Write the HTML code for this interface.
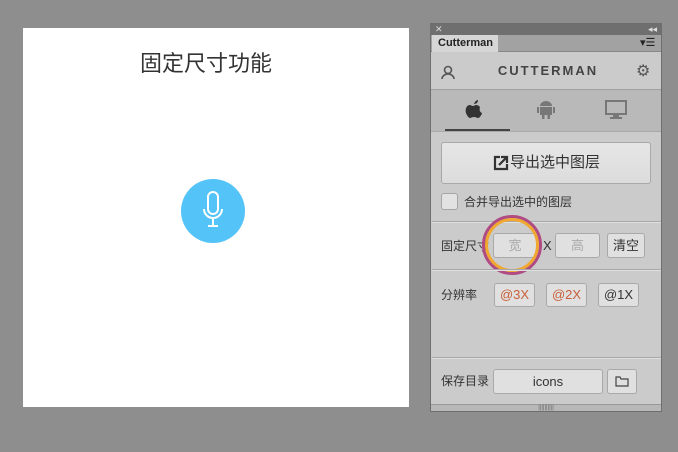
<!DOCTYPE html><html><head><meta charset="utf-8"><style>
body{margin:0;width:678px;height:452px;background:#8e8e8e;position:relative;overflow:hidden;font-family:"Liberation Sans","Noto Sans CJK SC",sans-serif}
div{position:absolute;box-sizing:border-box}
.btn{background:#e0e0e0;border:1px solid #a9a9a9;border-radius:3px;text-align:center;font-size:13px;color:#333}
.lbl{font-size:12px;color:#333;line-height:14px}
.sep{left:432px;width:229px;background:#a8a8a8;border-bottom:1px solid #e0e0e0;height:2px}
</style></head><body>
<div style="left:23px;top:28px;width:386px;height:379px;background:#fff"></div>
<div style="left:23px;top:50px;width:366px;text-align:center;font-size:22px;color:#333;line-height:28px">固定尺寸功能</div>
<div style="left:181px;top:179px;width:64px;height:64px;border-radius:50%;background:#53c3f8"></div>
<svg style="position:absolute;left:181px;top:179px" width="64" height="64"><rect x="27" y="13" width="10" height="22" rx="5" fill="none" stroke="#fff" stroke-width="2"/><path d="M23 30 a9 9 0 0 0 18 0 M32 39 v8 M27 47 h10" fill="none" stroke="#fff" stroke-width="2"/></svg>

<div style="left:430px;top:23px;width:232px;height:389px;background:#cbcbcb;border:1px solid #6e6e6e"></div>
<div style="left:431px;top:24px;width:230px;height:11px;background:#6f6f6f;color:#ddd;font-size:9px;line-height:10px;padding-left:4px">✕<span style="position:absolute;right:4px">◂◂</span></div>
<div style="left:431px;top:35px;width:230px;height:17px;background:#a2a2a2;border-bottom:1px solid #888"></div>
<div style="left:432px;top:35px;width:66px;height:17px;background:#d6d6d6;font-size:11px;font-weight:bold;color:#222;padding-left:6px;line-height:17px">Cutterman</div>
<div style="left:640px;top:36px;font-size:11px;color:#222">▾☰</div>
<svg style="position:absolute;left:441px;top:65px" width="14" height="14"><circle cx="7" cy="5" r="3.5" fill="none" stroke="#555" stroke-width="1.6"/><path d="M1 14 a6 5 0 0 1 12 0" fill="none" stroke="#555" stroke-width="1.6"/></svg>
<div style="left:470px;top:63px;width:156px;text-align:center;font-size:13px;font-weight:bold;letter-spacing:2px;color:#444">CUTTERMAN</div>
<div style="left:636px;top:61px;font-size:16px;color:#555">⚙</div>
<div style="left:431px;top:89px;width:230px;height:43px;background:#b9b9b9;border-top:1px solid #a0a0a0;border-bottom:1px solid #a8a8a8"></div>
<div style="left:445px;top:129px;width:65px;height:2px;background:#444"></div>
<svg style="position:absolute;left:465px;top:99px" width="18" height="20"><path d="M9 5 c1-3 3-4 4-4 c0 2-1 4-4 4z M4 6 c-3 1-4 5-3 8 c1 3 3 5 4 5 c1 0 2-1 4-1 c2 0 3 1 4 1 c2 0 4-4 4-5 c-2-1-3-3-2-6 c-1-1-2-2-4-2 c-1 0-2 1-3 1 c-1 0-2-1-4-1z" fill="#333"/></svg>
<svg style="position:absolute;left:537px;top:100px" width="18" height="19"><path d="M3 6 a6 5 0 0 1 12 0z" fill="#777"/><rect x="3" y="7" width="12" height="8" fill="#777"/><rect x="0" y="7" width="2" height="6" fill="#777"/><rect x="16" y="7" width="2" height="6" fill="#777"/><rect x="5" y="14" width="2.5" height="5" fill="#777"/><rect x="10.5" y="14" width="2.5" height="5" fill="#777"/></svg>
<svg style="position:absolute;left:605px;top:100px" width="22" height="19"><rect x="1" y="1" width="20" height="13" fill="none" stroke="#777" stroke-width="2"/><rect x="8" y="14" width="6" height="3" fill="#777"/><rect x="5" y="17" width="12" height="2" fill="#777"/></svg>
<div class="btn" style="left:441px;top:142px;width:210px;height:42px;line-height:40px;font-size:15px;background:linear-gradient(#e6e6e6,#dcdcdc);padding-left:18px">导出选中图层</div>
<svg style="position:absolute;left:493px;top:155px" width="16" height="16"><path d="M7 2 H2 V14 H14 V9" fill="none" stroke="#333" stroke-width="2.2"/><path d="M6 10 L13 3 M8 2 H14 V8" fill="none" stroke="#333" stroke-width="2.2"/></svg>
<div style="left:441px;top:193px;width:17px;height:17px;background:#e2e2e2;border:1px solid #a5a5a5;border-radius:3px"></div>
<div class="lbl" style="left:464px;top:195px">合并导出选中的图层</div>
<div class="sep" style="top:221px"></div>
<div class="lbl" style="left:441px;top:239px">固定尺寸</div>
<div class="btn" style="left:493px;top:233px;width:44px;height:25px;line-height:23px;color:#aaa">宽</div>
<div class="lbl" style="left:543px;top:239px;font-size:13px">X</div>
<div class="btn" style="left:555px;top:233px;width:45px;height:25px;line-height:23px;color:#aaa">高</div>
<div class="btn" style="left:607px;top:233px;width:38px;height:25px;line-height:23px">清空</div>
<div style="left:482px;top:215px;width:60px;height:60px;border-radius:50%;border:3px solid #b04a82"></div>
<div style="left:485px;top:218px;width:54px;height:54px;border-radius:50%;border:3px solid #f0a830"></div>
<div class="sep" style="top:269px"></div>
<div class="lbl" style="left:441px;top:288px">分辨率</div>
<div class="btn" style="left:494px;top:283px;width:41px;height:24px;line-height:22px;color:#c8603a">@3X</div>
<div class="btn" style="left:546px;top:283px;width:41px;height:24px;line-height:22px;color:#c8603a">@2X</div>
<div class="btn" style="left:598px;top:283px;width:41px;height:24px;line-height:22px">@1X</div>
<div class="sep" style="top:357px"></div>
<div class="lbl" style="left:441px;top:374px">保存目录</div>
<div class="btn" style="left:493px;top:369px;width:110px;height:25px;line-height:23px">icons</div>
<div class="btn" style="left:607px;top:369px;width:30px;height:25px"></div>
<svg style="position:absolute;left:615px;top:376px" width="14" height="11"><path d="M1 1 h4 l1 2 h7 v7 h-12z" fill="none" stroke="#444" stroke-width="1.2"/></svg>
<div style="left:431px;top:404px;width:230px;height:7px;background:#b8b8b8;border-top:1px solid #999;text-align:center;font-size:6px;line-height:6px;color:#666">||||||||||</div>
</body></html>
